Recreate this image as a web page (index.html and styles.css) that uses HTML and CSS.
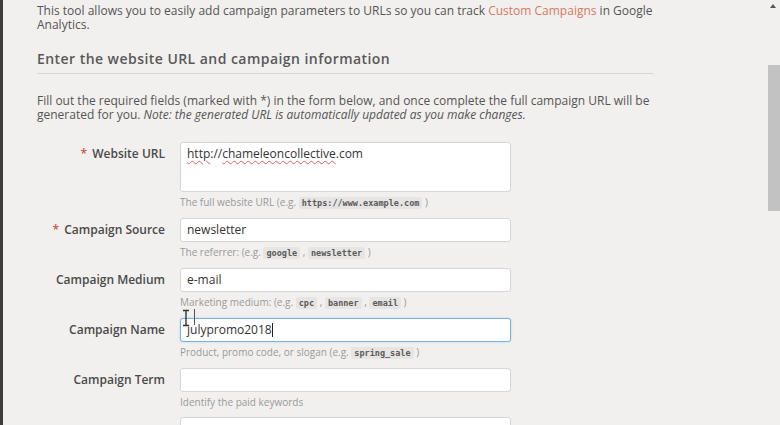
FILE: index.html
```html
<!DOCTYPE html>
<html lang="en">
<head>
    <meta charset="UTF-8">
    <title>Campaign URL Builder</title>
    <link rel="stylesheet" href="styles.css">
</head>
<body>

<div class="page">
    <p class="intro">This tool allows you to easily add campaign parameters to URLs so you can track <a href="#">Custom Campaigns</a> in Google Analytics.</p>

    <h2>Enter the website URL and campaign information</h2>

    <p class="note">Fill out the required fields (marked with *) in the form below, and once complete the full campaign URL will be generated for you. <em>Note: the generated URL is automatically updated as you make changes.</em></p>

    <div class="form">
        <div class="row">
            <label class="label"><span class="req">*</span> Website URL</label>
            <div class="field">
                <div class="box area"><span class="typo">http</span>://<span class="typo">chameleoncollective</span>.com</div>
                <div class="help">The full website URL (e.g. <code>https://www.example.com</code> )</div>
            </div>
        </div>
        <div class="row">
            <label class="label"><span class="req">*</span> Campaign Source</label>
            <div class="field">
                <div class="box">newsletter</div>
                <div class="help">The referrer: (e.g. <code>google</code> , <code>newsletter</code> )</div>
            </div>
        </div>
        <div class="row">
            <label class="label">Campaign Medium</label>
            <div class="field">
                <div class="box">e-mail</div>
                <div class="help">Marketing medium: (e.g. <code>cpc</code> , <code>banner</code> , <code>email</code> )</div>
            </div>
        </div>
        <div class="row">
            <label class="label">Campaign Name</label>
            <div class="field">
                <div class="box focus">julypromo2018<span class="caret"></span></div>
                <div class="help">Product, promo code, or slogan (e.g. <code>spring_sale</code> )</div>
                <svg class="ibeam" width="16" height="18" viewBox="0 0 16 18">
                    <path d="M2 1.5h6M2 16.5h6M5 1.5v15" stroke="#333" stroke-width="1.4" fill="none"/>
                    <path d="M13.5 0v16" stroke="#555" stroke-width="1" fill="none"/>
                </svg>
            </div>
        </div>
        <div class="row">
            <label class="label">Campaign Term</label>
            <div class="field">
                <div class="box"></div>
                <div class="help">Identify the paid keywords</div>
            </div>
        </div>
        <div class="row">
            <label class="label"></label>
            <div class="field">
                <div class="box"></div>
            </div>
        </div>
    </div>
</div>

<div class="scrollbar">
    <div class="arrow"></div>
    <div class="thumb"></div>
</div>

</body>
</html>
```

FILE: styles.css
```css
body {
    margin: 0;
    background-color: #f1f0ee;
    border-left: 3px solid #3d3d3d;
    font-family: "Open Sans", "Noto Sans", sans-serif;
    color: #555;
    height: 425px;
    overflow: hidden;
}
.page {
    padding: 4px 0 0 34px;
    width: 617px;
}
.intro {
    margin: 0;
    font-size: 12px;
    line-height: 14px;
}
.intro a {
    color: #d97a62;
    text-decoration: none;
}
h2 {
    margin: 17px 0 0;
    padding-bottom: 4px;
    border-bottom: 1px solid #d8d8d8;
    font-size: 14px;
    line-height: 20px;
    font-weight: 600;
    color: #585858;
    letter-spacing: 0.45px;
}
.note {
    margin: 20px 0 0;
    font-size: 12px;
    line-height: 14px;
}
.form {
    margin-top: 20px;
    display: flex;
    flex-direction: column;
    gap: 8px;
}
.row {
    display: grid;
    grid-template-columns: 128px 331px;
    column-gap: 15px;
}
.label {
    text-align: right;
    font-size: 12px;
    font-weight: 600;
    color: #4a4a4a;
    line-height: 24px;
}
.req {
    color: #c9553f;
    margin-right: 2px;
}
.field {
    position: relative;
}
.box {
    box-sizing: border-box;
    height: 24px;
    background: #fff;
    border: 1px solid #d6d6d6;
    border-radius: 3px;
    padding: 0 6px;
    font-size: 12px;
    line-height: 22px;
    color: #333;
}
.box.area {
    height: 50px;
    line-height: 22px;
}
.box.focus {
    border-color: #7eb2e0;
    box-shadow: 0 0 2px rgba(102, 175, 233, 0.5);
}
.typo {
    text-decoration: underline wavy #e06060;
    text-decoration-thickness: 1px;
    text-underline-offset: 2px;
}
.caret {
    display: inline-block;
    width: 1px;
    height: 14px;
    background: #222;
    vertical-align: -3px;
}
.help {
    margin-top: 3px;
    font-size: 10px;
    line-height: 14px;
    color: #9a9a9a;
}
code {
    font-family: "DejaVu Sans Mono", "Liberation Mono", monospace;
    font-size: 8.5px;
    font-weight: 600;
    color: #5a5a5a;
    background: #e6e5e3;
    padding: 1px 3px;
    border-radius: 2px;
}
.ibeam {
    position: absolute;
    left: 1px;
    top: -9px;
}
.scrollbar {
    position: fixed;
    top: 0;
    right: 0;
    width: 13px;
    height: 425px;
    background: #f1f0ee;
}
.arrow {
    position: absolute;
    top: 4px;
    left: 3px;
    width: 0;
    height: 0;
    border-left: 3px solid transparent;
    border-right: 3px solid transparent;
    border-bottom: 4px solid #555;
}
.thumb {
    position: absolute;
    top: 65px;
    left: 1px;
    width: 12px;
    height: 146px;
    background: #c2c2c2;
}
```
